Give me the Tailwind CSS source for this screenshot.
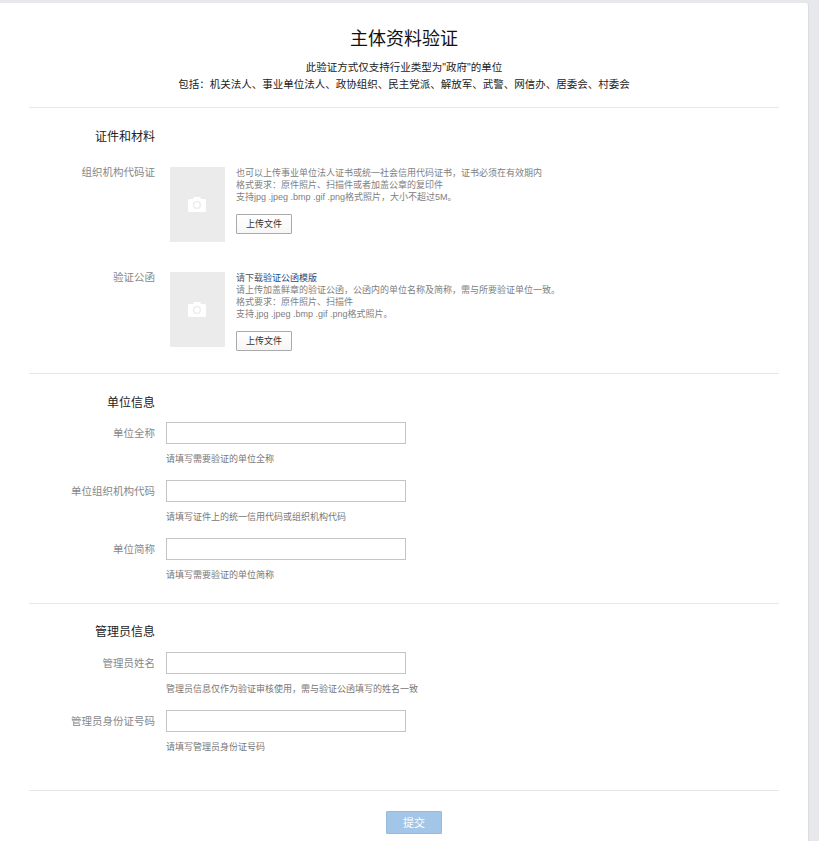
<!DOCTYPE html>
<html lang="zh-CN">
<head>
    <meta charset="UTF-8">
    <meta name="viewport" content="width=device-width, initial-scale=1.0">
    <title>主体资料验证</title>
    <script src="https://cdn.jsdelivr.net/npm/@tailwindcss/browser@4"></script>
</head>
<body class="bg-[#e7e8eb] h-[841px] overflow-hidden font-['Liberation_Sans','Noto_Sans_CJK_SC',sans-serif]">
    <div class="w-[809px] h-[838px] mt-[3px] bg-white rounded-tr-[3px] border-r border-[#dcdcde]">
        <!-- Header -->
        <header class="h-[104px] pt-[23px] flex flex-col items-center">
            <h1 class="text-[18px] leading-[26px] text-[#111]">主体资料验证</h1>
            <p class="mt-[7px] text-[10.5px] leading-[17px] text-[#222] text-center">此验证方式仅支持行业类型为"政府"的单位<br>包括：机关法人、事业单位法人、政协组织、民主党派、解放军、武警、网信办、居委会、村委会</p>
        </header>
        <div class="mx-[29px] h-px bg-[#e6e7e9]"></div>

        <!-- Documents -->
        <section class="h-[265px] pt-[21px]">
            <h2 class="w-[155px] text-right text-[12px] leading-[17px] text-[#222]">证件和材料</h2>
            <div class="flex mt-[21px]">
                <div class="w-[155px] text-right text-[10.5px] leading-[10px] text-[#888]">组织机构代码证</div>
                <div class="ml-[15px] w-[55px] h-[75px] pr-[1px] bg-[#ebebeb] flex items-center justify-center">
                    <svg width="18" height="15" viewBox="0 0 18 15"><path fill="#fff" fill-rule="evenodd" d="M1.5 2H5L6 0h6l1 2h3.500A1.500 1.500 0 0 1 18 3.500v10A1.500 1.500 0 0 1 16.500 15h-15A1.500 1.500 0 0 1 0 13.500v-10A1.500 1.500 0 0 1 1.500 2zM9 4a4 4 0 1 0 0 8 4 4 0 0 0 0-8zm0 1.300a2.700 2.700 0 1 1 0 5.400 2.700 2.700 0 0 1 0-5.400z"/></svg>
                </div>
                <div class="ml-[11px] -mt-[0.5px]">
                    <p class="text-[9px] leading-[12.300px] text-[#808080]">也可以上传事业单位法人证书或统一社会信用代码证书，证书必须在有效期内<br>格式要求：原件照片、扫描件或者加盖公章的复印件<br>支持jpg .jpeg .bmp .gif .png格式照片，大小不超过5M。</p>
                    <button class="block mt-[10.5px] pt-[2px] w-[56px] h-[20px] border border-[#aaa] rounded-[1px] bg-gradient-to-b from-white to-[#f6f6f6] text-[9px] text-[#333]">上传文件</button>
                </div>
            </div>
            <div class="flex mt-[30px]">
                <div class="w-[155px] text-right text-[10.5px] leading-[10px] text-[#888]">验证公函</div>
                <div class="ml-[15px] w-[55px] h-[75px] pr-[1px] bg-[#ebebeb] flex items-center justify-center">
                    <svg width="18" height="15" viewBox="0 0 18 15"><path fill="#fff" fill-rule="evenodd" d="M1.5 2H5L6 0h6l1 2h3.500A1.500 1.500 0 0 1 18 3.500v10A1.500 1.500 0 0 1 16.500 15h-15A1.500 1.500 0 0 1 0 13.500v-10A1.500 1.500 0 0 1 1.500 2zM9 4a4 4 0 1 0 0 8 4 4 0 0 0 0-8zm0 1.300a2.700 2.700 0 1 1 0 5.400 2.700 2.700 0 0 1 0-5.400z"/></svg>
                </div>
                <div class="ml-[11px] -mt-[0.5px]">
                    <p class="text-[9px] leading-[12.300px] text-[#808080]"><span class="text-[#555]">请下载</span><a class="text-[#1a4a80]">验证公函模版</a><br>请上传加盖鲜章的验证公函，公函内的单位名称及简称，需与所要验证单位一致。<br>格式要求：原件照片、扫描件<br>支持.jpg .jpeg .bmp .gif .png格式照片。</p>
                    <button class="block mt-[10.5px] pt-[2px] w-[56px] h-[20px] border border-[#aaa] rounded-[1px] bg-gradient-to-b from-white to-[#f6f6f6] text-[9px] text-[#333]">上传文件</button>
                </div>
            </div>
        </section>
        <div class="mx-[29px] h-px bg-[#e6e7e9]"></div>

        <!-- Organisation -->
        <section class="h-[229px] pt-[21px]">
            <h2 class="w-[155px] text-right text-[12px] leading-[17px] text-[#222]">单位信息</h2>
            <div class="mt-[10px] flex flex-col gap-[15px]">
                <div class="flex">
                    <label class="w-[155px] text-right text-[10.5px] leading-[22px] text-[#888]">单位全称</label>
                    <div class="ml-[11px]">
                        <input class="block w-[240px] h-[22px] border border-[#c4c4c4] bg-white">
                        <p class="mt-[9px] text-[9px] leading-[12px] text-[#777]">请填写需要验证的单位全称</p>
                    </div>
                </div>
                <div class="flex">
                    <label class="w-[155px] text-right text-[10.5px] leading-[22px] text-[#888]">单位组织机构代码</label>
                    <div class="ml-[11px]">
                        <input class="block w-[240px] h-[22px] border border-[#c4c4c4] bg-white">
                        <p class="mt-[9px] text-[9px] leading-[12px] text-[#777]">请填写证件上的统一信用代码或组织机构代码</p>
                    </div>
                </div>
                <div class="flex">
                    <label class="w-[155px] text-right text-[10.5px] leading-[22px] text-[#888]">单位简称</label>
                    <div class="ml-[11px]">
                        <input class="block w-[240px] h-[22px] border border-[#c4c4c4] bg-white">
                        <p class="mt-[9px] text-[9px] leading-[12px] text-[#777]">请填写需要验证的单位简称</p>
                    </div>
                </div>
            </div>
        </section>
        <div class="mx-[29px] h-px bg-[#e6e7e9]"></div>

        <!-- Administrator -->
        <section class="h-[186px] pt-[20px]">
            <h2 class="w-[155px] text-right text-[12px] leading-[17px] text-[#222]">管理员信息</h2>
            <div class="mt-[11px] flex flex-col gap-[15px]">
                <div class="flex">
                    <label class="w-[155px] text-right text-[10.5px] leading-[22px] text-[#888]">管理员姓名</label>
                    <div class="ml-[11px]">
                        <input class="block w-[240px] h-[22px] border border-[#c4c4c4] bg-white">
                        <p class="mt-[9px] text-[9px] leading-[12px] text-[#777]">管理员信息仅作为验证审核使用，需与验证公函填写的姓名一致</p>
                    </div>
                </div>
                <div class="flex">
                    <label class="w-[155px] text-right text-[10.5px] leading-[22px] text-[#888]">管理员身份证号码</label>
                    <div class="ml-[11px]">
                        <input class="block w-[240px] h-[22px] border border-[#c4c4c4] bg-white">
                        <p class="mt-[9px] text-[9px] leading-[12px] text-[#777]">请填写管理员身份证号码</p>
                    </div>
                </div>
            </div>
        </section>
        <div class="mx-[29px] h-px bg-[#e6e7e9]"></div>

        <div class="pt-[20px] pl-[386px]">
            <button class="block pt-[1px] w-[56px] h-[23px] border border-[#94bcd9] rounded-[1px] bg-[#a3c5e7] text-[11px] text-white">提交</button>
        </div>
    </div>
</body>
</html>
